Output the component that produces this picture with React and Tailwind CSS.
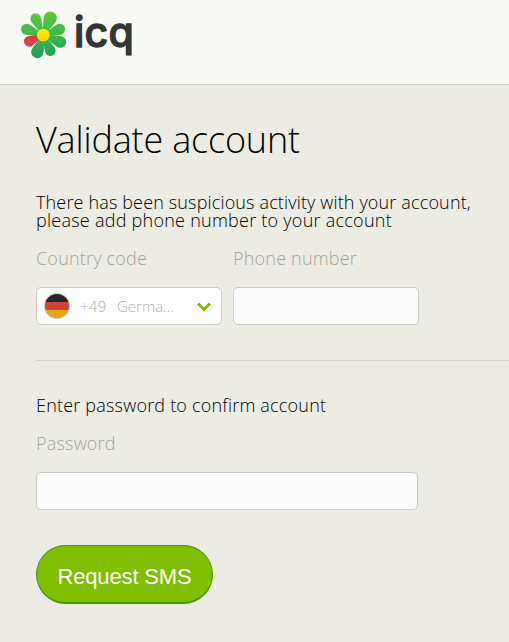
const petals = [
  { x: 121, y: 54, r: 19.5, fill: 'url(#leaf)' },
  { x: 77, y: 56, r: 16, fill: 'url(#leaf)' },
  { x: 50, y: 88, r: 16.5, fill: 'url(#leaf)' },
  { x: 58, y: 124, r: 16, fill: 'url(#red)' },
  { x: 82, y: 156, r: 18.5, fill: 'url(#leaf)' },
  { x: 121, y: 152, r: 16, fill: 'url(#leaf)' },
  { x: 151, y: 126, r: 17.5, fill: 'url(#leaf)' },
  { x: 149, y: 88, r: 16.5, fill: 'url(#leaf)' },
];

// A round-ended teardrop whose point sits at the flower's centre.
function petalPath({ x, y, r }) {
  const cx = 100;
  const cy = 105;
  const d = Math.hypot(x - cx, y - cy);
  const a = Math.atan2(y - cy, x - cx);
  const b = Math.asin(r / d);
  const t = Math.sqrt(d * d - r * r);
  const at = (dist, angle) => `${cx + dist * Math.cos(angle)} ${cy + dist * Math.sin(angle)}`;
  return `M${cx} ${cy}Q${at(t * 0.6, a - b * 1.3)} ${at(t, a - b)}A${r} ${r} 0 1 1 ${at(t, a + b)}Q${at(t * 0.6, a + b * 1.3)} ${cx} ${cy}Z`;
}

function Flower() {
  return (
    <svg className="h-[48px] w-[48px] shrink-0" viewBox="30 33 144 144">
      <defs>
        <linearGradient id="leaf" gradientUnits="userSpaceOnUse" x1="0" y1="36" x2="0" y2="174">
          <stop offset="0" stopColor="#5bcb35" />
          <stop offset="0.5" stopColor="#3cb84a" />
          <stop offset="1" stopColor="#1d9d5c" />
        </linearGradient>
        <linearGradient id="red" x1="0" y1="0" x2="0" y2="1">
          <stop offset="0" stopColor="#e2343c" />
          <stop offset="1" stopColor="#d34a50" />
        </linearGradient>
        <linearGradient id="sun" x1="0" y1="0" x2="0" y2="1">
          <stop offset="0" stopColor="#f8ea10" />
          <stop offset="1" stopColor="#ffd800" />
        </linearGradient>
      </defs>
      {petals.map((p) => (
        <path key={`${p.x}-${p.y}`} d={petalPath(p)} fill={p.fill} />
      ))}
      <circle cx="100" cy="105" r="21" fill="#3fb446" />
      <circle cx="100" cy="105" r="19" fill="url(#sun)" />
    </svg>
  );
}

function Flag() {
  return (
    <svg className="h-[26px] w-[26px] shrink-0" viewBox="0 0 26 26">
      <defs>
        <clipPath id="disc">
          <circle cx="13" cy="13" r="12" />
        </clipPath>
      </defs>
      <circle cx="13" cy="13" r="13" fill="#cfcdc0" />
      <g clipPath="url(#disc)">
        <path fill="#262626" d="M0 0h26v9H0z" />
        <path fill="#cc4536" d="M0 9h26v8H0z" />
        <path fill="#e0aa16" d="M0 17h26v9H0z" />
      </g>
    </svg>
  );
}

const box = 'block h-[38px] rounded-[5px] border border-[#cbcbc0] bg-[#fcfcfc] outline-none';
const label = 'block text-[18px] leading-[18px] tracking-[0.2px] text-[#a3a49b]';

export default function App() {
  return (
    <div className="h-[642px] w-[509px] overflow-hidden bg-[#edece4] font-['Open_Sans',sans-serif] font-light text-black">
      <header className="flex h-[85px] items-start border-b border-[#d3d3cb] bg-[#f8f8f4] pt-[11px] pl-[20px]">
        <Flower />
        <span className="mt-[-3px] ml-[6px] font-['Inter',sans-serif] text-[41px] leading-[48px] font-medium tracking-[0.2px] text-[#353535] [stroke-linejoin:round] [-webkit-text-stroke:1.3px_#353535]">
          icq
        </span>
      </header>
      <main className="pl-[36px]">
        <h1 className="pt-[35px] text-[36px] leading-[40px] tracking-[-0.18px]">Validate account</h1>
        <div className="mt-[33px] text-[18px] leading-[18px] whitespace-nowrap">
          <p className="tracking-[0.15px]">There has been suspicious activity with your account,</p>
          <p className="tracking-[0.25px]">please add phone number to your account</p>
        </div>
        <div className="mt-[20px] flex gap-[11px]">
          <div className="w-[186px]">
            <span className={label}>Country code</span>
            <button className="mt-[20px] flex h-[38px] w-[186px] items-center rounded-[5px] border border-[#cbcbc0] bg-white pl-[7px] text-[15px] text-[#b0b0aa]">
              <Flag />
              <span className="ml-[10px] w-[37px] text-left tracking-[0.3px]">+49</span>
              <span className="w-[60px] text-left">Germa...</span>
              <svg className="ml-[19px] h-[11px] w-[16px]" viewBox="0 0 16 11" fill="none" stroke="#7fbf00" strokeWidth="3">
                <path d="M2 2.5l6 5.8 6-5.8" />
              </svg>
            </button>
          </div>
          <label className="w-[186px]">
            <span className={label}>Phone number</span>
            <input className={`${box} mt-[20px] w-[186px]`} />
          </label>
        </div>
        <hr className="mt-[35px] border-[#d3d3cb]" />
        <p className="mt-[35px] text-[18px] leading-[18px] tracking-[0.2px]">Enter password to confirm account</p>
        <label className="mt-[20px] block">
          <span className={label}>Password</span>
          <input type="password" className={`${box} mt-[20px] w-[382px]`} />
        </label>
        <button className="mt-[35px] block h-[59px] w-[177px] rounded-[30px] border border-b-2 border-[#4b9600] bg-[#7fbf00] pt-[5px] font-['Liberation_Sans',sans-serif] text-[22px] font-normal tracking-[-0.15px] text-white">
          Request SMS
        </button>
      </main>
    </div>
  );
}
